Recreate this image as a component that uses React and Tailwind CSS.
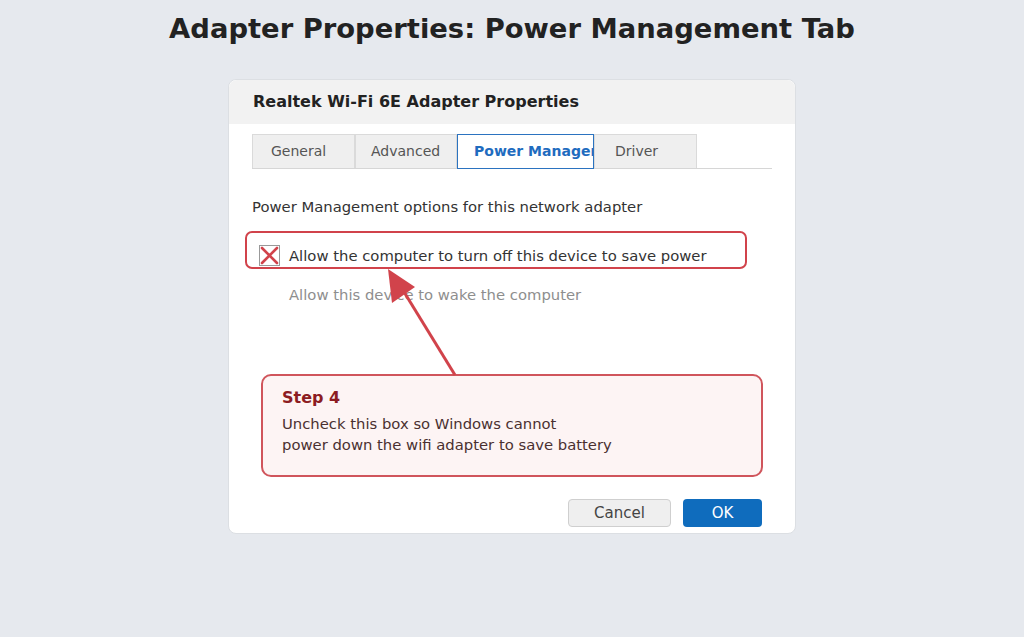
import React from 'react'

const tabs = [
  { name: 'General', w: 'w-[103px]', pl: 'pl-[18px]' },
  { name: 'Advanced', w: 'w-[102px]', pl: 'pl-[15px]' },
  { name: 'Power Management', w: 'w-[137px]', pl: 'pl-[16px]', active: true },
  { name: 'Driver', w: 'w-[103px]', pl: 'pl-[20px]' },
]

export default function App() {
  return (
    <div className="min-h-[637px] w-full bg-[#e6e9ee] font-['DejaVu_Sans',sans-serif] flex flex-col items-center">
      <h1 className="mt-[12px] text-[27.4px] leading-[34px] font-bold text-[#222]">
        Adapter Properties: Power Management Tab
      </h1>

      <div className="relative mt-[33px] w-[568px] rounded-[8px] border border-[#dcdfe3] bg-white">
        <div className="h-[44px] rounded-t-[8px] bg-[#f2f2f2] pl-[24px] flex items-center text-[16px] font-bold text-[#222]">
          Realtek Wi-Fi 6E Adapter Properties
        </div>

        <div className="px-[23px]">
          <div className="mt-[10px] flex items-start border-b border-[#d6d6d6]">
            {tabs.map((t) => (
              <div
                key={t.name}
                className={
                  t.active
                    ? `${t.w} ${t.pl} h-[35px] -mb-px overflow-hidden whitespace-nowrap border border-[#2b73c0] bg-white flex items-center text-[14px] font-bold text-[#1f6cbf]`
                    : `${t.w} ${t.pl} h-[34px] overflow-hidden whitespace-nowrap border-t border-l border-r border-[#dadada] bg-[#efefef] flex items-center text-[14px] text-[#555]`
                }
              >
                {t.name}
              </div>
            ))}
          </div>

          <p className="mt-[28px] text-[14.8px] leading-[20px] text-[#333]">
            Power Management options for this network adapter
          </p>

          <div className="mt-[14px] -ml-[7px] w-[502px] h-[38px] rounded-[7px] border-2 border-[#d1434b] flex items-start pl-[12px] pt-[12px]">
            <div className="w-[21px] h-[21px] border border-[#999] bg-white flex items-center justify-center">
              <svg width="19" height="19" viewBox="0 0 19 19">
                <path d="M2 2 L17 17 M17 2 L2 17" stroke="#d1434b" strokeWidth="2.6" strokeLinecap="round" />
              </svg>
            </div>
            <span className="ml-[9px] text-[14.8px] leading-[20px] mt-[1px] text-[#333]">
              Allow the computer to turn off this device to save power
            </span>
          </div>

          <p className="mt-[16px] ml-[37px] text-[14.8px] leading-[20px] text-[#8e8e8e]">
            Allow this device to wake the computer
          </p>

          <div className="mt-[69px] ml-[9px] w-[502px] h-[103px] rounded-[10px] border-2 border-[#d0555c] bg-[#fdf4f4] pl-[19px] pt-[12px]">
            <div className="text-[16px] leading-[20px] font-bold text-[#8c1c22]">Step 4</div>
            <div className="mt-[5px] text-[14.8px] leading-[21px] text-[#4a3030]">
              Uncheck this box so Windows cannot
              <br />
              power down the wifi adapter to save battery
            </div>
          </div>

          <div className="mt-[22px] mb-[6px] flex justify-end gap-[12px] pr-[10px]">
            <button className="w-[103px] h-[28px] rounded-[4px] border border-[#cfcfcf] bg-[#efefef] text-[15px] text-[#444]">
              Cancel
            </button>
            <button className="w-[79px] h-[28px] rounded-[4px] bg-[#0f6cbd] text-[15px] text-white">
              OK
            </button>
          </div>
        </div>

        <svg
          className="absolute left-0 top-0 pointer-events-none"
          width="568"
          height="454"
          viewBox="0 0 568 454"
        >
          <line x1="226" y1="295" x2="172" y2="207" stroke="#d1434b" strokeWidth="3" />
          <polygon points="159,189 163,223 186,207" fill="#d1434b" />
        </svg>
      </div>
    </div>
  )
}
